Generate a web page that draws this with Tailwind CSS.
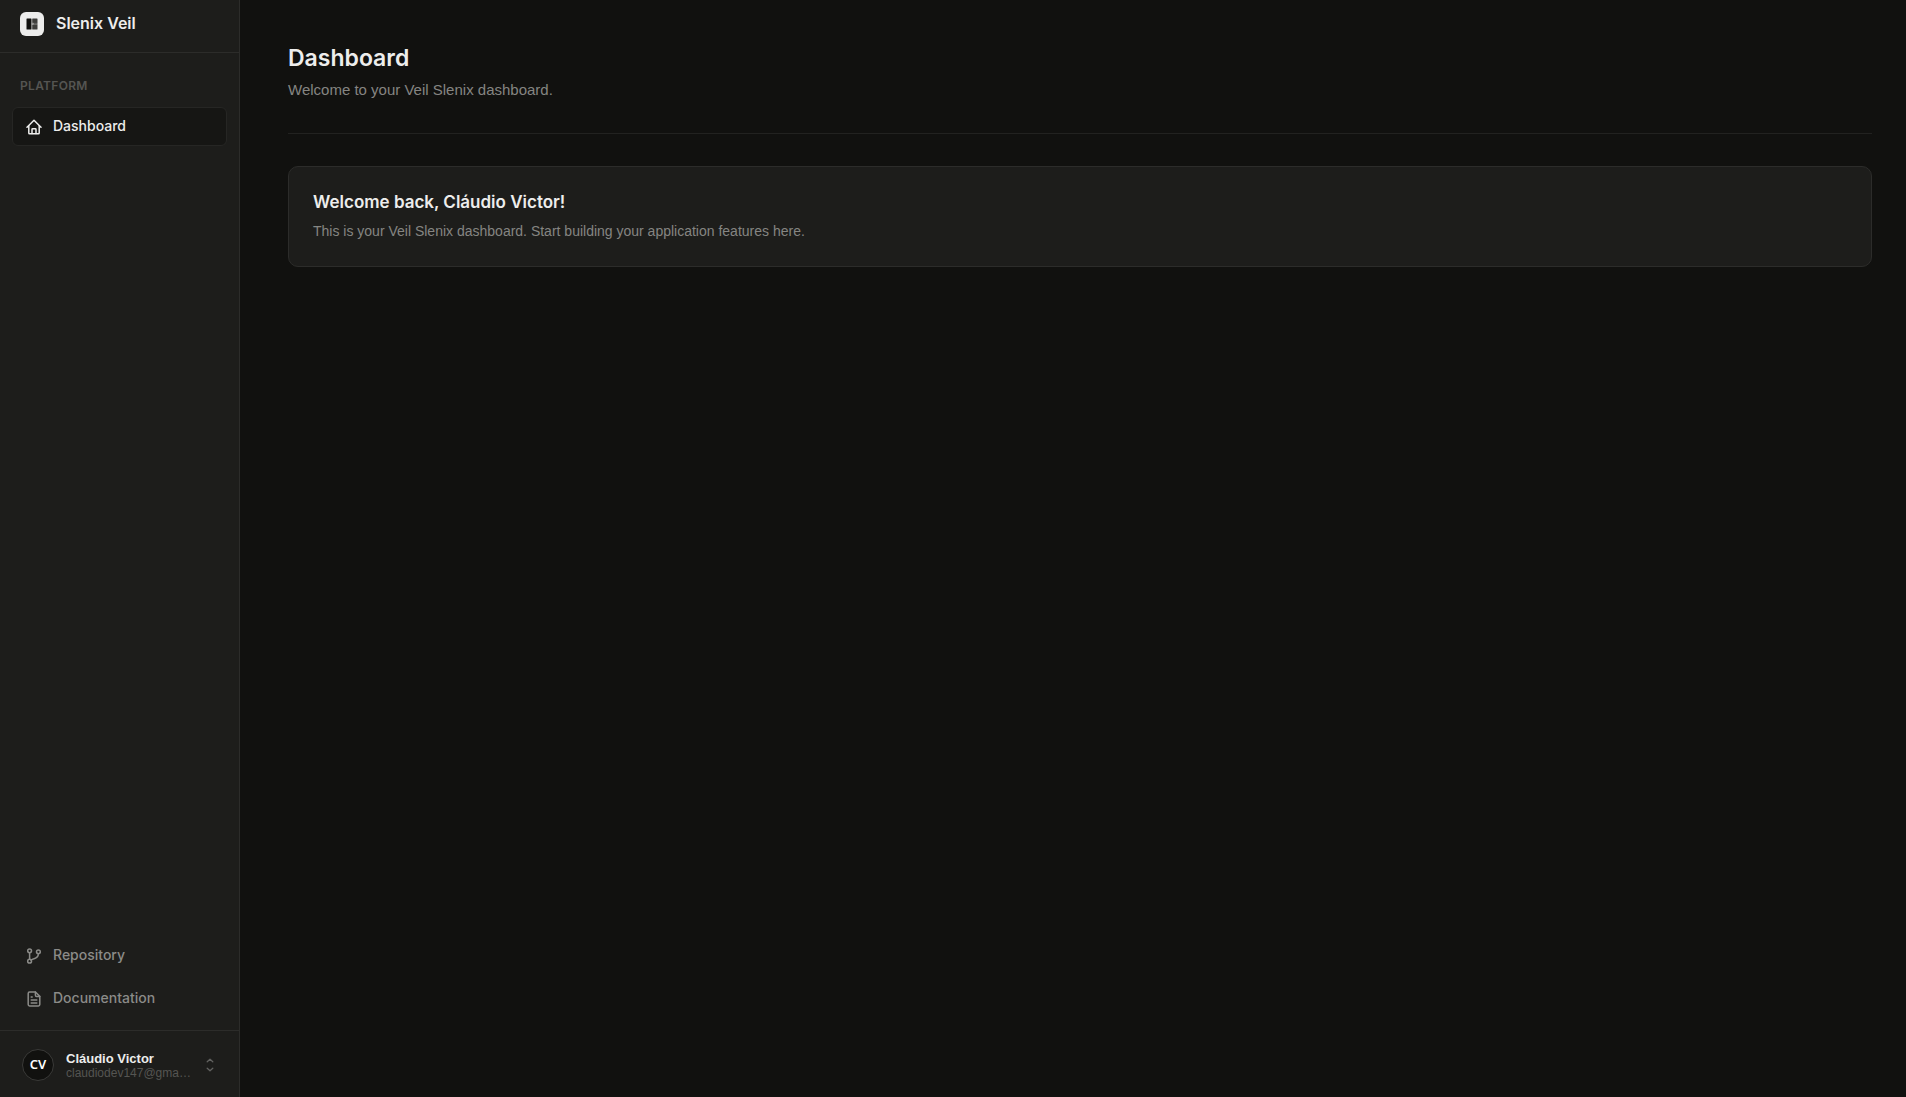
<!DOCTYPE html>
<html lang="en">

<head>
    <meta charset="UTF-8">
    <meta name="viewport" content="width=device-width, initial-scale=1.0">
    <title>Dashboard - Slenix Veil</title>
    <script src="https://cdn.jsdelivr.net/npm/@tailwindcss/browser@4"></script>
</head>

<body class="flex min-h-screen bg-[#11110f] font-['Inter',sans-serif] text-[#ededec]">

    <!-- Sidebar -->
    <aside class="flex w-60 shrink-0 flex-col border-r border-[#2c2c2a] bg-[#1d1d1b]">
        <a href="#" class="flex items-start gap-3 border-b border-[#2c2c2a] px-5 pt-3 pb-4">
            <span class="flex size-6 items-center justify-center rounded-md bg-[#ededec]">
                <svg class="size-3" viewBox="0 0 12 12" aria-hidden="true">
                    <rect x="0.5" y="0.5" width="5" height="11" rx="0.5" fill="#11110f" />
                    <rect x="6.2" y="0.5" width="5.3" height="4.5" rx="0.5" fill="#3d3d3b" />
                    <rect x="6.2" y="6.6" width="5.3" height="4.9" rx="0.5" fill="#3d3d3b" />
                    <rect x="5.5" y="4.8" width="2" height="2" fill="#9a9a98" />
                    <rect x="7.5" y="4.8" width="4" height="2" fill="#5c5c5a" />
                </svg>
            </span>
            <span class="text-base leading-[22px] font-semibold">Slenix Veil</span>
        </a>

        <nav class="flex flex-1 flex-col px-3 pt-6 pb-3" aria-label="Main">
            <h2 class="mb-3 px-2 text-xs leading-[18px] font-semibold tracking-wide text-[#555552]">PLATFORM</h2>
            <a href="#" aria-current="page"
                class="flex h-[39px] items-center gap-[11px] rounded-md border border-[#262624] bg-[#161614] px-[13px] pb-0.5 text-sm font-medium">
                <svg class="size-4 translate-y-px" viewBox="0 0 16 16" fill="none" stroke="currentColor"
                    stroke-width="1.5" stroke-linecap="round" stroke-linejoin="round" aria-hidden="true">
                    <path d="M1 8.2 8 1.2l7 7" />
                    <path d="M2.8 6.8V14a.8.8 0 0 0 .8.8h8.8a.8.8 0 0 0 .8-.8V6.8" />
                    <path d="M6 14.6v-4.2a.7.7 0 0 1 .7-.7h2.6a.7.7 0 0 1 .7.7v4.2" />
                </svg>
                Dashboard
            </a>

            <div class="mt-auto flex flex-col gap-1 text-[#8b8b88]">
                <a href="#" class="flex h-[39px] items-center gap-[11px] rounded-md px-[14px] pb-0.5 text-sm font-medium">
                    <svg class="size-4 translate-y-px" viewBox="0 0 16 16" fill="none" stroke="currentColor"
                        stroke-width="1.5" stroke-linecap="round" stroke-linejoin="round" aria-hidden="true">
                        <circle cx="3.6" cy="2.8" r="1.9" />
                        <circle cx="3.6" cy="13.2" r="1.9" />
                        <circle cx="12.4" cy="3.8" r="1.9" />
                        <path d="M3.6 4.7v6.6M12.4 5.7c0 3-2.4 4.6-5 5.2-1 .3-1.8.8-2.4 1.2" />
                    </svg>
                    Repository
                </a>
                <a href="#" class="flex h-[39px] items-center gap-[11px] rounded-md px-[14px] pb-0.5 text-sm font-medium">
                    <svg class="size-4 translate-y-px" viewBox="0 0 16 16" fill="none" stroke="currentColor"
                        stroke-width="1.5" stroke-linecap="round" stroke-linejoin="round" aria-hidden="true">
                        <path d="M9.4 1H3.6a1.4 1.4 0 0 0-1.4 1.4v11.2A1.4 1.4 0 0 0 3.6 15h8.8a1.4 1.4 0 0 0 1.4-1.4V5.4z" />
                        <path d="M9.4 1v3.2a1.2 1.2 0 0 0 1.2 1.2h3.2M5.2 6h1M5.2 9h5.6M5.2 12h5.6" />
                    </svg>
                    Documentation
                </a>
            </div>
        </nav>

        <!-- User menu -->
        <div class="border-t border-[#2c2c2a] px-3 py-2">
            <button type="button" aria-label="Account menu"
                class="flex w-full items-center rounded-md pt-[10px] pr-[9px] pb-2 pl-[10px] text-left font-['Liberation_Sans',sans-serif]">
                <span
                    class="mr-3 flex size-8 shrink-0 items-center justify-center rounded-full border border-[#3a3a38] bg-[#11110f] font-['Noto_Sans',sans-serif] text-[13px] font-semibold text-white">CV</span>
                <span class="min-w-0 flex-1 pt-0.5">
                    <span class="block truncate text-[13px] leading-[14px] font-bold">Cláudio Victor</span>
                    <span class="block truncate text-xs leading-[14px] text-[#555552]">claudiodev147@gmail.com</span>
                </span>
                <svg class="ml-2.5 size-4 shrink-0 text-[#626260]" viewBox="0 0 16 16" fill="none" stroke="currentColor"
                    stroke-width="1.3" stroke-linecap="round" stroke-linejoin="round" aria-hidden="true">
                    <path d="m5.2 4.8 2.8-2.6 2.8 2.6M5.2 11.2l2.8 2.6 2.8-2.6" />
                </svg>
            </button>
        </div>
    </aside>

    <!-- Content -->
    <main class="min-w-0 flex-1 pt-10 pr-[34px] pl-12">
        <header class="mb-8 border-b border-[#222220] pb-[33px]">
            <h1 class="text-[23px] leading-9 font-semibold">Dashboard</h1>
            <p class="mt-[3px] font-['Liberation_Sans',sans-serif] text-[15px] leading-[21px] text-[#858582]">Welcome to your Veil Slenix dashboard.</p>
        </header>

        <section class="rounded-[10px] border border-[#2c2c2a] bg-[#1d1d1b] px-6 py-[23px]">
            <h2 class="text-[17px] leading-6 font-semibold">Welcome back, Cláudio Victor!</h2>
            <p class="mt-1.5 font-['Liberation_Sans',sans-serif] text-sm leading-[23px] text-[#858582]">This is your Veil Slenix dashboard. Start building your
                application features here.</p>
        </section>
    </main>

</body>

</html>
